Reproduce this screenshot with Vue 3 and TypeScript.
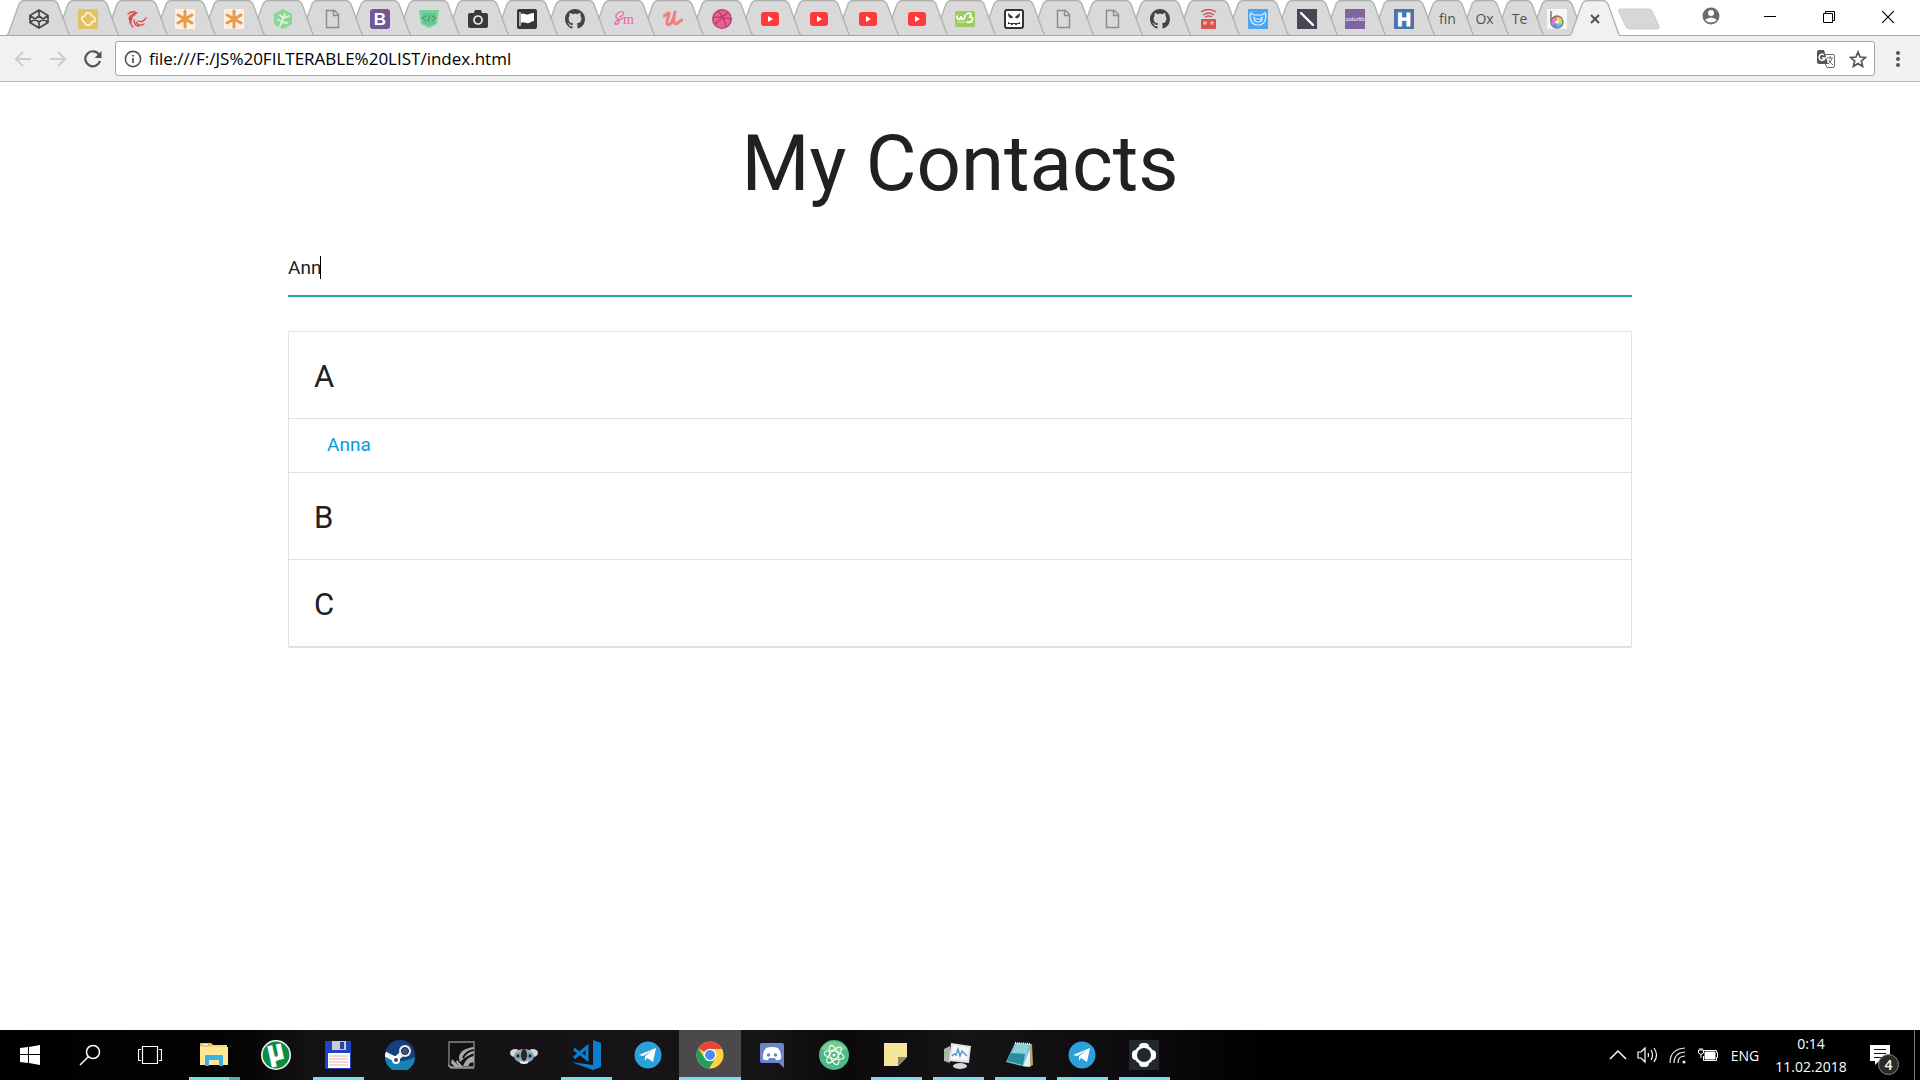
<script setup lang="ts">
import { computed, ref } from 'vue'

interface Tab {
  name: string
  width: number
  icon?: string
  label?: string
  active?: boolean
}

interface TaskItem {
  name: string
  icon: string
  running?: boolean
  stacked?: boolean
  active?: boolean
}

interface Group {
  letter: string
  names: string[]
}

const file =
  '<path d="M4.500 1.500h8l4 4v13h-12zM11.500 1.500v5h5" fill="none" stroke="#8c8c8c" stroke-width="1.400"/>'
const asterisk =
  '<path d="M0 0h20v20H0z" fill="#fcefe3"/><path d="M10 2v16M3 6l14 8M17 6L3 14" stroke="#e9994a" stroke-width="3" stroke-linecap="round"/>'
const youtube =
  '<rect x="1" y="3" width="18" height="14" rx="3" fill="#ff3a3a"/><path d="M8 7l5 3-5 3z" fill="#fff"/>'
const github =
  '<path transform="scale(1.25)" fill="#444" d="M8 0C3.58 0 0 3.58 0 8c0 3.54 2.29 6.53 5.47 7.59.4.07.55-.17.55-.38 0-.19-.01-.82-.01-1.49-2.01.37-2.53-.49-2.69-.94-.09-.23-.48-.94-.82-1.13-.28-.15-.68-.52-.01-.53.63-.01 1.08.58 1.23.82.72 1.21 1.87.87 2.33.66.07-.52.28-.87.51-1.07-1.78-.2-3.64-.89-3.64-3.95 0-.87.31-1.59.82-2.15-.08-.2-.36-1.02.08-2.12 0 0 .67-.21 2.2.82.64-.18 1.32-.27 2-.27.68 0 1.36.09 2 .27 1.53-1.04 2.2-.82 2.2-.82.44 1.1.16 1.92.08 2.12.51.56.82 1.27.82 2.15 0 3.07-1.87 3.75-3.65 3.95.29.25.54.73.54 1.48 0 1.07-.01 1.93-.01 2.2 0 .21.15.46.55.38A8.013 8.013 0 0016 8c0-4.42-3.58-8-8-8z"/>'

const favicons: [string, string][] = [
  ['CodePen', '<path d="M10 1l9 5.500v7L10 19l-9-5.500v-7zM10 1v6M10 13v6M1 6.500l9 6.500 9-6.500M1 13.500L10 7l9 6.500" fill="none" stroke="#484848" stroke-width="1.700" stroke-linejoin="round"/>'],
  ['Diamond', '<rect width="20" height="20" rx="1" fill="#e2c263"/><path d="M8 4h4l1 2 4 3v3l-3 1-2 3H8l-1-2-3-3V8l3-1z" fill="none" stroke="#fff8e2" stroke-width="1.500" stroke-linejoin="round"/>'],
  ['Swirl', '<g fill="none" stroke="#e04545" stroke-width="1.300" stroke-linecap="round"><path d="M1 5q3-3 7-2M2 10q1-5 8-6M3 14q-1-6 5-8M6 18q-4-3-1-9M12 17q-5 0-5-6M17 15q-5 3-8-2M19 9q-3 5-8 3"/></g>'],
  ['Notes', asterisk],
  ['Notes', asterisk],
  ['Treehouse', '<path d="M10 0l9 5v10l-9 5-9-5V5z" fill="#8bd694"/><path d="M7 17l5-12M10 9L7 6M9 12l-4-1M11 9l5-2M9 13l5 1" stroke="#dff3e0" stroke-width="1.800" stroke-linecap="round"/>'],
  ['Page', file],
  ['Bootstrap', '<rect width="20" height="20" rx="3" fill="#6f5895"/><text x="10" y="16" text-anchor="middle" font-family="Liberation Sans, sans-serif" font-weight="700" font-size="17" fill="#fff">B</text>'],
  ['Code guide', '<path d="M0 1h20l-2 14-8 4-8-4z" fill="#76d39c"/><path d="M3 4h14l-1 10-6 3-6-3z" fill="#67c690"/><path d="M7 7L3 9l4 3M13 7l4 2-4 3M11 6l-2 7" fill="none" stroke="#3f9464"/>'],
  ['Camera', '<path d="M2 4h4l1-3h6l1 3h4q2 0 2 2v11q0 2-2 2H2q-2 0-2-2V6q0-2 2-2z" fill="#3a3a3a"/><circle cx="10" cy="11" r="4" fill="none" stroke="#ececec" stroke-width="1.700"/>'],
  ['Flag', '<rect width="20" height="20" rx="2" fill="#363636"/><path d="M3 3v14" stroke="#fff" stroke-width="1.200"/><path d="M4 5c3-2 5 2 8 0q3-1 5-1v8q-2 0-5 2c-3 1-5-2-8 0z" fill="#fff"/>'],
  ['GitHub', github],
  ['Sassmeister', '<path d="M9 3c-3-1-8 2-7 5 1 2 4 3 3 5-1 3-5 3-4 1 1-3 7-4 8-5M9 3c2 1 0 4-4 5" fill="none" stroke="#e860a4" stroke-width="1.200"/><text x="9" y="15" font-family="Liberation Serif, serif" font-size="14" fill="#e860a4">m</text>'],
  ['Udemy', '<path d="M1 7c2-1 3-3 5-3 1 1-3 8-2 11 3 3 6-3 8-12-1 5-2 11 0 12 3 0 4-3 7-4" fill="none" stroke="#f27f7b" stroke-width="3" stroke-linecap="round" stroke-linejoin="round"/>'],
  ['Dribbble', '<circle cx="10" cy="10" r="9.300" fill="#ec5e96" stroke="#bd3b70" stroke-width="1.300"/><path d="M6 2c4 4 7 10 8 16M1 8c6 1 12-1 15-5M3 16c3-6 9-8 16-6" fill="none" stroke="#bd3b70" stroke-width="1.400"/>'],
  ['YouTube', youtube],
  ['YouTube', youtube],
  ['YouTube', youtube],
  ['YouTube', youtube],
  ['W3', '<rect y="2" width="20" height="16" rx="1" fill="#9bce5f"/><path d="M2 7c0 5 4 4 4 0 0 5 4 4 4-1M12 5c3-2 5 0 3 3 5 0 2 7-3 5" fill="none" stroke="#fff" stroke-width="1.700" stroke-linecap="round"/><path d="M3 13h7" stroke="#d9efc1"/>'],
  ['Grin', '<rect x="1" y="1" width="18" height="18" rx="2" fill="#fff" stroke="#333" stroke-width="2"/><path d="M4 4l5 4q-1 2-3 1t-2-5zM16 4l-5 4q1 2 3 1t2-5zM4 13h1v1h10v-1h1v2h-3v1h-2v-1H9v1H7v-1H4z" fill="#333"/>'],
  ['Page', file],
  ['Page', file],
  ['GitHub', github],
  ['Transmitter', '<rect x="2" y="10" width="15" height="10" rx="1" fill="#d9534f"/><g fill="none" stroke="#f1c6c4" stroke-width="1.200"><circle cx="6" cy="14" r="1.200"/><circle cx="13" cy="14" r="1.200"/></g><path d="M2 3q8-5 15 0M4 6q6-4 11 0M6 8q4-2 7 0" fill="none" stroke="#d9534f" stroke-width="1.400"/>'],
  ['Bear', '<path d="M0 0h20v20H0z" fill="#4ba6f2"/><path d="M3 4l3 2h8l3-2 1 3-1 5q-2 4-7 4t-7-4L2 7zM6 10h8q0 3-4 3t-4-3M5 8l2 1M15 8l-2 1" fill="none" stroke="#e3f2ff" stroke-width="1.200"/>'],
  ['Slash', '<path d="M0 0h20v20H0z" fill="#494653"/><path d="M4 4l12 12" stroke="#fff" stroke-width="2.400" stroke-linecap="round"/>'],
  ['Colorlib', '<path d="M0 0h20v20H0z" fill="#8064a2"/><text x="10" y="12" text-anchor="middle" font-family="Liberation Sans, sans-serif" font-size="6" fill="#fff">colorlib</text>'],
  ['H', '<path d="M0 0h20v20H0z" fill="#4d72b0"/><text x="10" y="17" text-anchor="middle" font-family="Liberation Sans, sans-serif" font-weight="700" font-size="19" stroke="#fff" fill="#fff">H</text>'],
]

const tabs: Tab[] = [
  ...favicons.map(([name, icon], i) => ({ name, icon, width: i % 4 === 3 ? 48 : 49 })),
  { name: 'Find', label: 'fin', width: 39 },
  { name: 'Oxygen', label: 'Ox', width: 35 },
  { name: 'Text', label: 'Te', width: 35 },
  {
    name: 'Colour picker',
    width: 40,
    icon: '<path d="M0 0h20v20H0z" fill="#f5f5f7"/><path d="M4 2v11" stroke="#8d8d95" stroke-width="1.800"/><path d="M10 13V7a6 6 0 0 1 5 3z" fill="#ffd54a"/><path d="M10 13l5-3a6 6 0 0 1 0 6z" fill="#b4e35a"/><path d="M10 13l5 3a6 6 0 0 1-5 3z" fill="#52c7e8"/><path d="M10 13v6a6 6 0 0 1-5-3z" fill="#6d8df0"/><path d="M10 13l-5 3a6 6 0 0 1 0-6z" fill="#d77ae0"/><path d="M10 13l-5-3a6 6 0 0 1 5-3z" fill="#ff7d6b"/><circle cx="10" cy="13" r="6" fill="none" stroke="#777782" stroke-width="1.300"/><circle cx="10" cy="13" r="1.600" fill="#fff"/>',
  },
  { name: 'Contacts', width: 36, active: true },
]

// Tab outline: slanted sides that overlap the neighbours by eight pixels on each side.
function outline(tab: Tab, closed: boolean): string {
  const w = tab.width + 16
  const line = `M0 36 Q2 35 3 32 L13 4 Q15 .5 18 .5 H${w - 18} Q${w - 15} .5 ${w - 13} 4 L${w - 3} 32 Q${w - 2} 35 ${w} 36`
  return closed ? `${line} Z` : line
}

const telegram =
  '<circle cx="15" cy="15" r="13.500" fill="#2ba0da"/><path d="M6 15l17-7-3 14-6-4-2 3v-5l8-6-10 6z" fill="#fff"/>'

const tasks: TaskItem[] = [
  { name: 'File Explorer', running: true, stacked: true, icon: '<path d="M1 4q0-1 1-1h10l2 2h14v20H1z" fill="#f4d57a"/><path d="M1 7h28v18H1z" fill="#ffe694"/><path d="M2 3h10l1 3H1z" fill="#f5bd2d"/><path d="M4 4h5v1H4z" fill="#fff"/><path d="M6 26V16q0-1 1-1h16q1 0 1 1v10h-4v-6h-10v6z" fill="#36b2e6"/>' },
  { name: 'Torrent', icon: '<circle cx="15" cy="15" r="14.200" fill="#0a8c42" stroke="#f4f6f4" stroke-width="1.600"/><text x="15" y="20" text-anchor="middle" transform="rotate(-12 15 15)" font-family="Liberation Sans, sans-serif" font-weight="700" font-size="28" fill="#fff" stroke="#fff">µ</text>' },
  { name: 'Commander', running: true, icon: '<path d="M2 1h26v28H3l-1-1z" fill="#1f45c4"/><path d="M9 1h14v9H9z" fill="#c9ccd6"/><path d="M17 2h4v7h-4z" fill="#2746a8"/><path d="M5 13h22v15H5z" fill="#fff"/><path d="M6 16h19M6 19h19M6 22h19M6 25h19" stroke="#efadad"/>' },
  { name: 'Steam', icon: '<circle cx="15" cy="15" r="15" fill="#173f7c"/><path d="M0 17a15 15 0 0 0 30 0q-14 8-30 0" fill="#1682b8"/><path d="M0 14l10 5M11 19l8-7" stroke="#f2f5f8" stroke-width="5"/><circle cx="20" cy="11" r="6" fill="#e9edf2"/><circle cx="20" cy="11" r="3.500" fill="#44546c" stroke="#13294c"/><circle cx="11" cy="20" r="4" fill="#fff"/><circle cx="11" cy="20" r="2" fill="#385070"/>' },
  { name: 'Feather', icon: '<path d="M2 2h25v25H4l-2-2z" fill="#121212" stroke="#8b8b8b" stroke-width="1.300"/><path d="M27 7q-14 2-15 10 0 3 1 5 6-6 14-9zM27 16q-6 1-9 6l-2 4h5l2-3 4-1zM5 19l8 8H8l-4-4zM10 20l6 7h-3l-4-5z" fill="#aaa"/><path d="M27 10q-8 1-11 8" fill="none" stroke="#121212" stroke-width="2"/><path d="M1 25l3 3h23" fill="none" stroke="#999" stroke-width="1.300"/>' },
  { name: 'Koala', icon: '<ellipse cx="6" cy="13" rx="5" ry="4" fill="#d4d6d6"/><ellipse cx="24" cy="13" rx="5" ry="4" fill="#d4d6d6"/><ellipse cx="15" cy="16" rx="10" ry="7" fill="#a6adaf"/><circle cx="9" cy="16" r="3" fill="#5e95b5"/><circle cx="21" cy="16" r="3" fill="#5e95b5"/><circle cx="9" cy="16" r="1.200" fill="#101010"/><circle cx="21" cy="16" r="1.200" fill="#101010"/><ellipse cx="15" cy="15" rx="3" ry="6" fill="#262829"/><path d="M11 22q4 2 8 0" stroke="#eee" stroke-width="2" fill="none"/>' },
  { name: 'Code editor', running: true, icon: '<path d="M22 0l8 3v24l-8 3L0 22l22 3z" fill="#0d7dd1"/><path d="M3 9l13 10V7L3 18" fill="none" stroke="#0d7dd1" stroke-width="3"/>' },
  { name: 'Telegram', icon: telegram },
  { name: 'Chrome', running: true, active: true, icon: '<circle cx="15" cy="15" r="13.500" fill="#ffd23f"/><path d="M15 15L3.300 8.300A13.500 13.500 0 0 1 27.200 9H15z" fill="#e2493b"/><path d="M3.300 8.300A13.500 13.500 0 0 0 14 28.500L20.500 18 15 15 9.500 18z" fill="#1fa15d"/><circle cx="15" cy="15" r="6.300" fill="#fff"/><circle cx="15" cy="15" r="5" fill="#4c8bf5"/>' },
  { name: 'Discord', icon: '<path d="M3 4q0-1 2-1h20q2 0 2 2v23l-5-5H5q-2 0-2-2z" fill="#6d83ca"/><path d="M9 8q6-2 12 0 4 5 3 11-3 2-5 1l-1-2h-6l-1 2q-2 1-5-1Q5 13 9 8z" fill="#fff"/><circle cx="11.500" cy="15" r="1.800" fill="#6d83ca"/><circle cx="18.500" cy="15" r="1.800" fill="#6d83ca"/>' },
  { name: 'Atom', icon: '<circle cx="15" cy="15" r="15" fill="#4fb985"/><path d="M2 9a15 15 0 0 1 26 0q-13 6-26 0" fill="#7acb8e"/><g fill="none" stroke="#effaf3" stroke-width="1.200"><ellipse cx="15" cy="15" rx="10" ry="4" transform="rotate(12 15 15)"/><ellipse cx="15" cy="15" rx="10" ry="4" transform="rotate(72 15 15)"/><ellipse cx="15" cy="15" rx="10" ry="4" transform="rotate(132 15 15)"/></g><circle cx="15" cy="15" r="1.500" fill="#fff"/>' },
  { name: 'Sticky Notes', running: true, icon: '<path d="M3 3h23v14l-9 9H3z" fill="#f3e69b"/><path d="M17 17h9l-9 9z" fill="#8f875e"/>' },
  { name: 'Performance', running: true, icon: '<path d="M1 9l6-3v17l-6-2z" fill="#aeb4b6"/><path d="M1 13h3" stroke="#75cf35" stroke-width="2"/><ellipse cx="17" cy="26" rx="7" ry="3" fill="#d4d7d8"/><path d="M8 3l20 3-2 17-20-2z" fill="#e3e5e6"/><path d="M10 5l16 3-2 12-16-1z" fill="#f6f8f9"/><path d="M9 16l2-2 2 1 2-6 2 7 2-5 2 2 3 3" fill="none" stroke="#5295cd" stroke-width="1.400"/>' },
  { name: 'Notepad', running: true, icon: '<path d="M11 3l16 1 1 21-4 2z" fill="#b9a574"/><path d="M10 3l15 1-3 23-9-2-12-3z" fill="#75c2cf"/><path d="M11 4l13 1-6 20-15-4z" fill="#8fcfd9"/><path d="M6 13l14 1-2 11-16-4z" fill="#268e9e"/><path d="M25 9l-7 17 7 1z" fill="#e7eff0"/><path d="M10 3l15 1" stroke="#f4f4f4" stroke-width="2" stroke-dasharray="1 1"/>' },
  { name: 'Telegram', running: true, icon: telegram },
  { name: 'Player', running: true, icon: '<path d="M0 0h30v30H0z" fill="#22282b"/><g fill="#fff"><circle cx="15" cy="15" r="10"/><rect x="10" y="3" width="10" height="24" rx="4"/><rect x="3" y="10" width="24" height="10" rx="4"/></g><circle cx="15" cy="15" r="7" fill="#22282b"/>' },
]

const groups: Group[] = [
  { letter: 'A', names: ['Anna', 'Abe', 'Adam'] },
  { letter: 'B', names: ['Beth', 'Bill'] },
  { letter: 'C', names: ['Carrie', 'Courtney'] },
]

const address = ref('file:///F:/JS%20FILTERABLE%20LIST/index.html')
const query = ref('Ann')
const visibleGroups = computed(() =>
  groups.map((g) => ({
    letter: g.letter,
    names: g.names.filter((n) => n.toLowerCase().includes(query.value.toLowerCase())),
  })),
)
</script>

<template>
  <div class="screen">
    <header class="browser">
      <div class="titlebar">
        <nav class="tabs" aria-label="Tabs">
          <button
            v-for="(tab, i) in tabs"
            :key="i"
            type="button"
            class="tab"
            :class="{ active: tab.active }"
            :style="{ width: tab.width + 'px', zIndex: tab.active ? 60 : 50 - i }"
            :aria-label="tab.name"
          >
            <svg class="shape" :width="tab.width + 16" height="36" :viewBox="`0 0 ${tab.width + 16} 36`" aria-hidden="true">
              <path class="fill" :d="outline(tab, true)" />
              <path class="edge" :d="outline(tab, false)" />
            </svg>
            <svg v-if="tab.icon" class="favicon" width="20" height="20" viewBox="0 0 20 20" aria-hidden="true" v-html="tab.icon" />
            <span v-else-if="tab.label" class="label">{{ tab.label }}</span>
            <svg v-else class="favicon" width="20" height="20" viewBox="0 0 20 20" aria-hidden="true">
              <path d="M6 6l8 8M14 6l-8 8" stroke="#505050" stroke-width="2" />
            </svg>
          </button>
        </nav>
        <button type="button" class="new-tab" aria-label="New tab">
          <svg width="44" height="22" viewBox="0 0 44 22">
            <path d="M3 1H32Q34 1 35 3L42 18Q43 21 40 21H13Q10 21 9 19L2 4Q1 1 3 1z" fill="#d7d7d7" stroke="#cdcdcd" />
          </svg>
        </button>
        <div class="window-controls">
          <button type="button" class="profile" aria-label="Profile">
            <svg width="18" height="18" viewBox="0 0 18 18">
              <circle cx="9" cy="9" r="8.500" fill="#6b6b6b" />
              <circle cx="9" cy="6" r="3" fill="#fff" />
              <path d="M3 13q6-5 12 0-6 5-12 0" fill="#fff" />
            </svg>
          </button>
          <button type="button" aria-label="Minimize">
            <svg width="12" height="12" viewBox="0 0 12 12"><path d="M0 5.500h12" stroke="#000" /></svg>
          </button>
          <button type="button" aria-label="Restore">
            <svg width="12" height="12" viewBox="0 0 12 12">
              <path d="M.500 2.500h9v9h-9zM2.500 2.500v-2h9v9h-2" fill="none" stroke="#000" />
            </svg>
          </button>
          <button type="button" aria-label="Close">
            <svg width="12" height="12" viewBox="0 0 12 12"><path d="M0 0l12 12M12 0L0 12" stroke="#000" stroke-width="1.200" /></svg>
          </button>
        </div>
      </div>

      <div class="toolbar">
        <button type="button" aria-label="Back" class="nav">
          <svg width="18" height="18" viewBox="0 0 18 18"><path d="M17 9H2M9 2L2 9l7 7" fill="none" stroke="#ccc" stroke-width="2" /></svg>
        </button>
        <button type="button" aria-label="Forward" class="nav">
          <svg width="18" height="18" viewBox="0 0 18 18"><path d="M1 9h15M9 2l7 7-7 7" fill="none" stroke="#ccc" stroke-width="2" /></svg>
        </button>
        <button type="button" aria-label="Reload" class="nav">
          <svg width="18" height="18" viewBox="0 0 18 18">
            <path d="M15 4.500A7.500 7.500 0 1 0 16 11" fill="none" stroke="#555" stroke-width="2.200" />
            <path d="M17.500 1v7h-7z" fill="#555" />
          </svg>
        </button>
        <div class="omnibox">
          <svg width="18" height="18" viewBox="0 0 18 18" aria-hidden="true">
            <circle cx="9" cy="9" r="7.600" fill="none" stroke="#555" stroke-width="1.600" />
            <path d="M9 8v5M9 5v1.600" stroke="#555" stroke-width="1.800" />
          </svg>
          <input v-model="address" type="text" aria-label="Address" spellcheck="false" />
          <button type="button" aria-label="Translate this page">
            <svg width="18" height="18" viewBox="0 0 18 18">
              <path d="M8 4.500h8q1.500 0 1.500 1.500v10q0 1.500-1.500 1.500h-6l-2-4" fill="#fff" stroke="#6b6b6b" />
              <path d="M2 0h5l4 14H2q-2 0-2-2V2q0-2 2-2z" fill="#555" />
              <path d="M7 5a3 3 0 1 0 1 3H5" fill="none" stroke="#fff" stroke-width="1.500" />
              <path d="M10 8h6M13 6v2M15 8q-1 4-4 6M12 10q1 3 4 5" fill="none" stroke="#6b6b6b" />
            </svg>
          </button>
          <button type="button" aria-label="Bookmark this page">
            <svg width="18" height="18" viewBox="0 0 18 18">
              <path d="M9 2l2 5 5.500.400-4.200 3.600 1.300 5.400L9 13.500l-4.600 2.900L5.700 11 1.500 7.400 7 7z" fill="none" stroke="#555" stroke-width="1.700" />
            </svg>
          </button>
        </div>
        <button type="button" aria-label="Menu" class="menu">
          <svg width="6" height="18" viewBox="0 0 6 18" fill="#555">
            <circle cx="3" cy="3" r="2" /><circle cx="3" cy="9" r="2" /><circle cx="3" cy="15" r="2" />
          </svg>
        </button>
      </div>
    </header>

    <main class="page">
      <div class="container">
        <h1>My Contacts</h1>
        <div class="field">
          <input v-model="query" type="text" aria-label="Search names" spellcheck="false" />
          <span class="caret" />
        </div>
        <ul class="collection">
          <template v-for="group in visibleGroups" :key="group.letter">
            <li class="group"><h5>{{ group.letter }}</h5></li>
            <li v-for="name in group.names" :key="name" class="item"><a href="#">{{ name }}</a></li>
          </template>
        </ul>
      </div>
    </main>

    <footer class="taskbar">
      <div class="system">
        <button type="button" aria-label="Start">
          <svg width="20" height="20" viewBox="0 0 20 20" fill="#fff">
            <path d="M0 3l8-1v7H0zM9 2l11-2v9H9zM0 10h8v8l-8-1zM9 10h11v10L9 18z" />
          </svg>
        </button>
        <button type="button" aria-label="Search">
          <svg width="22" height="22" viewBox="0 0 22 22" fill="none" stroke="#fff" stroke-width="1.500">
            <circle cx="14" cy="8" r="6.500" /><path d="M9.500 12.500L1 21" />
          </svg>
        </button>
        <button type="button" aria-label="Task View">
          <svg width="24" height="20" viewBox="0 0 24 20" fill="none" stroke="#fff">
            <path d="M4.500 1.500h15v17h-15zM3 4.500H.500v11H3M21 4.500h2.500v11H21" stroke-width="1.200" />
          </svg>
        </button>
      </div>
      <button
        v-for="(task, i) in tasks"
        :key="i"
        type="button"
        class="task"
        :class="{ running: task.running, active: task.active, stacked: task.stacked }"
        :aria-label="task.name"
      >
        <svg width="30" height="30" viewBox="0 0 30 30" aria-hidden="true" v-html="task.icon" />
      </button>

      <div class="tray">
        <button type="button" aria-label="Show hidden icons">
          <svg width="18" height="20" viewBox="0 0 18 20"><path d="M1 14l8-8 8 8" fill="none" stroke="#fff" stroke-width="1.500" /></svg>
        </button>
        <button type="button" aria-label="Volume">
          <svg width="22" height="20" viewBox="0 0 22 20" fill="none" stroke="#fff" stroke-width="1.200">
            <path d="M1 7h3l4-4v14l-4-4H1zM11 8q1 2 0 4M14 5q3 5 0 10M17 3q5 7 0 14" />
          </svg>
        </button>
        <button type="button" aria-label="Network">
          <svg width="18" height="20" viewBox="0 0 18 20" fill="none" stroke="#e8e8e8" stroke-width="1.200">
            <path d="M1 18Q1 4 16 3M5 18Q5 8 16 7M9 18q0-7 7-7" /><circle cx="15" cy="17" r="1" fill="#fff" />
          </svg>
        </button>
        <button type="button" aria-label="Battery">
          <svg width="20" height="20" viewBox="0 0 20 20" fill="none" stroke="#fff">
            <path d="M6 5.500h12.500v2h1v5h-1v3h-13V11" /><path d="M7 7h10v7H7z" fill="#fff" /><path d="M.500 5h5v3q-3 3-5 0zM2 3v2M4 3v2M3 9v4" />
          </svg>
        </button>
        <button type="button" class="lang">ENG</button>
        <button type="button" class="clock"><span>0:14</span><span>11.02.2018</span></button>
        <button type="button" class="notices" aria-label="4 notifications">
          <svg width="20" height="20" viewBox="0 0 20 20">
            <path d="M0 0h20v16H9l-4 4v-4H0z" fill="#fff" /><path d="M4 4.500h12M4 8.500h12M4 12.500h8" stroke="#111" />
          </svg>
          <span class="badge">4</span>
        </button>
      </div>
    </footer>
  </div>
</template>

<style>
body {
  margin: 0;
}
</style>

<style scoped>
.screen {
  display: flex;
  flex-direction: column;
  min-height: 100vh;
  background: #fff;
  font-family: 'Open Sans', 'Noto Sans', sans-serif;
}

.screen * {
  box-sizing: border-box;
}

button {
  display: flex;
  align-items: center;
  justify-content: center;
  padding: 0;
  border: 0;
  background: none;
  font: inherit;
  color: inherit;
}

svg {
  display: block;
  flex: none;
}

.titlebar {
  display: flex;
  height: 36px;
  border-bottom: 1px solid #a6a6a6;
}

.tabs {
  display: flex;
  height: 36px;
  padding-left: 14px;
}

.tab {
  position: relative;
  flex: none;
  height: 36px;
}

.shape {
  position: absolute;
  top: 0;
  left: -8px;
}

.fill {
  fill: #d9d9d9;
}

.edge {
  fill: none;
  stroke: #b0b0b0;
  stroke-width: 1.3;
}

.tab:not(.active)::after {
  content: '';
  position: absolute;
  right: -8px;
  bottom: 0;
  left: -8px;
  height: 1px;
  background: #a6a6a6;
}

.active .fill {
  fill: #f1f1f1;
}

.favicon,
.label {
  position: relative;
  margin-top: 2px;
}

.label {
  font-size: 14px;
  line-height: 20px;
  white-space: nowrap;
  color: #505050;
}

.new-tab {
  height: 22px;
  margin: 8px 0 0 4px;
}

.window-controls {
  display: flex;
  margin-left: auto;
  padding-right: 3px;
}

.window-controls button {
  width: 59px;
  height: 34px;
}

.window-controls .profile {
  height: 31px;
}

.toolbar {
  display: flex;
  align-items: center;
  height: 46px;
  padding: 0 14px;
  background: #f1f1f1;
  border-bottom: 1px solid #b6b6b6;
}

.nav {
  width: 18px;
  height: 30px;
  margin-right: 17px;
}

.nav:nth-child(3) {
  margin-right: 13px;
}

.omnibox {
  display: flex;
  flex: 1;
  align-items: center;
  gap: 14px;
  height: 35px;
  padding: 0 7px 0 8px;
  background: #fff;
  border: 1px solid #a6a6a6;
  border-radius: 3px;
}

.omnibox input {
  flex: 1;
  min-width: 0;
  height: 30px;
  margin-left: -7px;
  padding: 0;
  border: 0;
  outline: 0;
  background: none;
  font: 17px 'Open Sans', 'Noto Sans', sans-serif;
  color: #000;
}

.menu {
  width: 16px;
  height: 30px;
  margin-left: 15px;
}

.page {
  flex: 1;
  font-family: Roboto, sans-serif;
  color: #212121;
}

.container {
  width: 70%;
  margin: 0 auto;
}

h1 {
  margin: 0;
  padding-top: 39px;
  font-size: 78px;
  font-weight: 400;
  line-height: 86px;
  text-align: center;
}

.field {
  position: relative;
  margin-top: 32px;
}

.field input {
  display: block;
  width: 100%;
  height: 58px;
  padding: 0;
  border: 0;
  border-bottom: 2px solid #26a69a;
  outline: 0;
  background: none;
  font: 19px Roboto, sans-serif;
  color: #212121;
}

.caret {
  position: absolute;
  top: 17px;
  left: 32px;
  width: 1px;
  height: 23px;
  background: #000;
}

.collection {
  margin: 34px 0 0;
  padding: 0;
  list-style: none;
  border: 1px solid #e0e0e0;
  border-bottom-width: 2px;
  border-radius: 2px;
}

.group,
.item {
  border-bottom: 1px solid #e0e0e0;
}

.collection li:last-child {
  border-bottom: 0;
}

.group {
  padding: 28px 25px 24px;
}

h5 {
  margin: 0;
  font-size: 31px;
  font-weight: 400;
  line-height: 34px;
}

.item {
  padding: 11px 38px 13px;
  font-size: 19px;
  line-height: 29px;
}

.item a {
  color: #039be5;
  text-decoration: none;
}

.taskbar {
  display: flex;
  height: 50px;
  background: linear-gradient(90deg, #000 0, #050405 13%, #151215 16%, #171417 40%, #0b090b 44%, #171417 50%, #0c0a0c 60%, #000 66%);
  color: #fff;
}

.system {
  display: flex;
  padding-right: 3px;
}

.system button {
  width: 60px;
}

.task {
  position: relative;
  width: 62px;
}

.task.active {
  background: #4b494c;
}

.running::after {
  content: '';
  position: absolute;
  right: 5px;
  bottom: 0;
  left: 6px;
  height: 3px;
  background: #76dcf8;
}

.running.active::after {
  right: 0;
  left: 0;
}

.stacked::after {
  border-right: 11px solid #5ca9bd;
}

.tray {
  display: flex;
  margin-left: auto;
  padding-right: 5px;
  font-size: 14px;
}

.tray button {
  width: 30px;
}

.tray .lang {
  width: 44px;
}

.tray .clock {
  flex-direction: column;
  width: 88px;
  line-height: 23px;
}

.tray .notices {
  position: relative;
  width: 60px;
  border-right: 1px solid #777;
}

.notices svg {
  margin-right: 10px;
}

.badge {
  position: absolute;
  top: 24px;
  right: 15px;
  width: 21px;
  height: 21px;
  border: 1px solid #8a8a8a;
  border-radius: 50%;
  background: #2b2b2b;
  font-weight: 600;
  line-height: 19px;
}
</style>
